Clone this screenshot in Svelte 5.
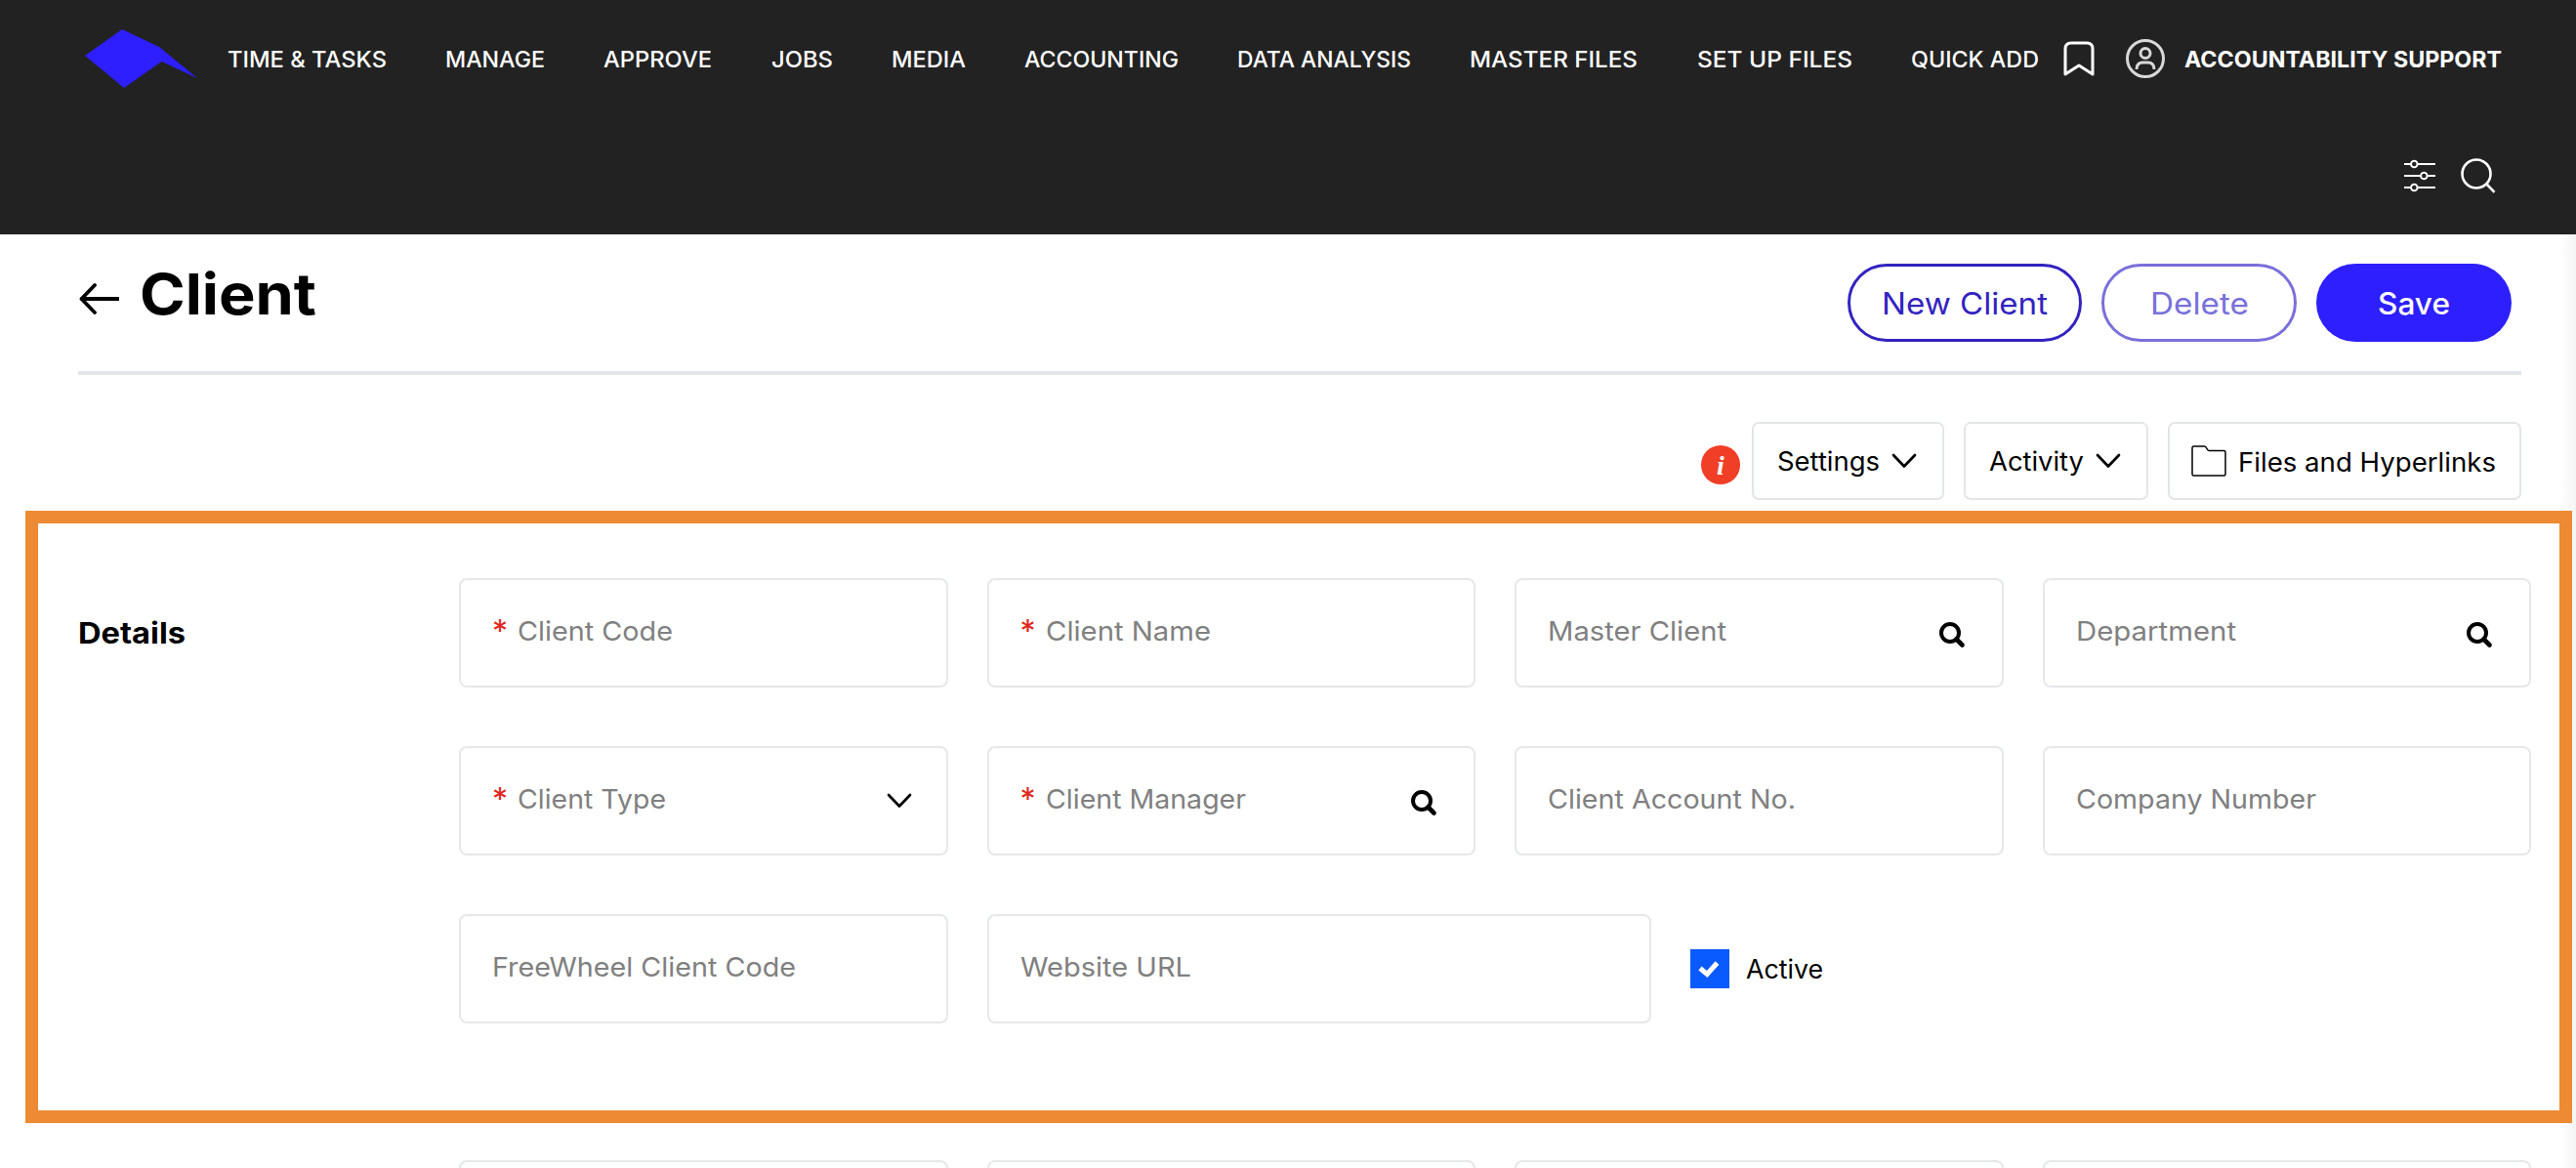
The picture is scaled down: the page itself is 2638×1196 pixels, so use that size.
<script lang="ts">
  const navItems = [
    { label: 'TIME & TASKS', width: 163 },
    { label: 'MANAGE', width: 102 },
    { label: 'APPROVE', width: 111 },
    { label: 'JOBS', width: 63 },
    { label: 'MEDIA', width: 76 },
    { label: 'ACCOUNTING', width: 158 },
    { label: 'DATA ANALYSIS', width: 178 },
    { label: 'MASTER FILES', width: 172 },
    { label: 'SET UP FILES', width: 159 },
    { label: 'QUICK ADD', width: 131 }
  ];

  type Field = { label: string; width: number; required?: boolean; icon?: 'search' | 'chevron'; wide?: boolean };

  const rows: Field[][] = [
    [
      { label: 'Client Code', width: 159, required: true },
      { label: 'Client Name', width: 169, required: true },
      { label: 'Master Client', width: 183, icon: 'search' },
      { label: 'Department', width: 164, icon: 'search' }
    ],
    [
      { label: 'Client Type', width: 152, required: true, icon: 'chevron' },
      { label: 'Client Manager', width: 205, required: true, icon: 'search' },
      { label: 'Client Account No.', width: 254 },
      { label: 'Company Number', width: 246 }
    ],
    [
      { label: 'FreeWheel Client Code', width: 311 },
      { label: 'Website URL', width: 175, wide: true }
    ]
  ];

  let active = $state(true);
</script>

<!-- Text stretched or tightened to a fixed advance width -->
{#snippet fit(label: string, width: number)}
  <svg class="fit" {width} height="1em" aria-label={label}>
    <text x="0" y="0.86em" textLength={width} lengthAdjust="spacingAndGlyphs">{label}</text>
  </svg>
{/snippet}

{#snippet chevron()}
  <svg class="chevron" width="28" height="18" viewBox="0 0 28 18" aria-hidden="true">
    <path d="M3 3l11 11.500L25 3" fill="none" stroke="currentColor" stroke-width="2.700" stroke-linecap="round" stroke-linejoin="round" />
  </svg>
{/snippet}

{#snippet search()}
  <svg class="search" width="28" height="28" viewBox="0 0 28 28" aria-hidden="true">
    <circle cx="12" cy="12" r="9" fill="none" stroke="currentColor" stroke-width="4" />
    <path d="M18.500 18.500l6 6" stroke="currentColor" stroke-width="4.600" stroke-linecap="round" />
  </svg>
{/snippet}

<div class="page">
  <header class="header">
    <div class="topbar">
      <svg class="logo" width="118" height="60" viewBox="0 0 118 60" aria-hidden="true">
        <path d="M0 27L38 0L76 18L115 50L78.500 33L40 60z" fill="#2d1fff" />
      </svg>
      <nav class="nav">
        {#each navItems as item}
          <a class="nav-link" href="#menu">{@render fit(item.label, item.width)}</a>
        {/each}
      </nav>
      <svg class="bookmark" width="32" height="36" viewBox="0 0 32 36" fill="none" aria-hidden="true">
        <path d="M2 34V8Q2 2 8 2H24Q30 2 30 8V34L16 25z" stroke="#fff" stroke-width="3" stroke-linejoin="round" />
      </svg>
      <svg class="avatar" width="40" height="40" viewBox="0 0 40 40" fill="none" stroke="#d8d8d8" stroke-width="3" aria-hidden="true">
        <circle cx="20" cy="20" r="18.500" />
        <circle cx="20" cy="14.500" r="5" />
        <path d="M11 31q0-7 6.500-7h5q6.500 0 6.500 7" />
      </svg>
      <span class="user">{@render fit('ACCOUNTABILITY SUPPORT', 325)}</span>
    </div>
    <div class="tools">
      <svg width="32" height="34" viewBox="0 0 32 34" fill="none" stroke="#fff" stroke-width="2" aria-hidden="true">
        <path d="M0 5h7M13.500 5H32M0 17h17M23.500 17H32M0 29h7M13.500 29H32" />
        <circle cx="10.300" cy="5" r="3.300" />
        <circle cx="20.300" cy="17" r="3.300" />
        <circle cx="10.300" cy="29" r="3.300" />
      </svg>
      <svg width="36" height="36" viewBox="0 0 36 36" fill="none" stroke="#fff" stroke-width="2.600" aria-hidden="true">
        <circle cx="16" cy="16" r="14.500" />
        <path d="M26 26L34.500 34.800" />
      </svg>
    </div>
  </header>

  <section class="title-row">
    <svg class="back" width="42" height="36" viewBox="0 0 42 36" fill="none" aria-hidden="true">
      <path d="M17 4L3.500 18L17 32M3.500 18H41" stroke="#000" stroke-width="3.800" stroke-linecap="round" stroke-linejoin="round" />
    </svg>
    <h1>{@render fit('Client', 181)}</h1>
    <div class="actions">
      <button class="pill new">{@render fit('New Client', 170)}</button>
      <button class="pill delete" disabled>{@render fit('Delete', 101)}</button>
      <button class="pill save">{@render fit('Save', 74)}</button>
    </div>
  </section>

  <section class="toolbar">
    <svg class="info" width="40" height="40" viewBox="0 0 40 40" aria-hidden="true">
      <circle cx="20" cy="20" r="20" fill="#f03e27" />
      <text x="20" y="29.500" text-anchor="middle" class="info-mark">i</text>
    </svg>
    <button class="box settings">{@render fit('Settings', 105)}{@render chevron()}</button>
    <button class="box activity">{@render fit('Activity', 97)}{@render chevron()}</button>
    <button class="box files">
      <svg class="folder" width="36" height="32" viewBox="0 0 36 32" fill="none" aria-hidden="true">
        <path d="M1 29.500V2.500Q1 1 2.500 1H13.500Q15 1 16 3.500Q16.800 5.500 18.500 5.500H33.500Q35 5.500 35 7V29.500Q35 31 33.500 31H2.500Q1 31 1 29.500z" stroke="#000" stroke-width="1.500" />
      </svg>
      <span class="files-label">{@render fit('Files and Hyperlinks', 264)}</span>
    </button>
  </section>

  <section class="details">
    <h2>{@render fit('Details', 110)}</h2>
    <div class="form">
      {#each rows as row}
        <div class="row">
          {#each row as field}
            <div class="field" class:wide={field.wide}>
              {#if field.required}<span class="star">*</span>{/if}
              <span class="label">{@render fit(field.label, field.width)}</span>
              {#if field.icon === 'search'}{@render search()}{/if}
              {#if field.icon === 'chevron'}{@render chevron()}{/if}
            </div>
          {/each}
          {#if row.length === 2}
            <button class="check" role="checkbox" aria-checked={active} onclick={() => (active = !active)}>
              <svg width="40" height="40" viewBox="0 0 40 40" aria-hidden="true">
                <rect width="40" height="40" fill="#0a5bff" />
                {#if active}
                  <path d="M10 19.500l7.200 6L27.500 14" fill="none" stroke="#fff" stroke-width="5" />
                {/if}
              </svg>
              {@render fit('Active', 79)}
            </button>
          {/if}
        </div>
      {/each}
    </div>
  </section>

  <section class="next">
    {#each [0, 1, 2, 3] as i (i)}
      <div class="field"></div>
    {/each}
  </section>
</div>

<style>
  :global(body) {
    background: #fff;
    overflow: hidden;
  }

  .page {
    width: 2638px;
    height: 1196px;
    overflow: hidden;
    box-sizing: border-box;
    background: linear-gradient(to left, #f4f4f4, #fff 16px);
    font-family: Inter, 'Liberation Sans', sans-serif;
    color: #000;
  }

  .page * {
    box-sizing: border-box;
  }

  button {
    font: inherit;
    color: inherit;
    background: none;
    border: none;
    padding: 0;
  }

  svg {
    display: block;
    flex-shrink: 0;
  }

  .fit {
    overflow: visible;
    fill: currentColor;
  }

  .header {
    height: 240px;
    background: #222;
    color: #fff;
  }

  .topbar {
    display: flex;
    align-items: center;
    height: 120px;
    padding-left: 87px;
  }

  .logo {
    margin-right: 28px;
  }

  .nav {
    display: flex;
    gap: 60.200px;
    font-size: 23px;
    font-weight: 550;
  }

  .nav-link {
    color: inherit;
    text-decoration: none;
  }

  .bookmark {
    margin-left: 25px;
  }

  .avatar {
    margin-left: 32px;
  }

  .user {
    margin-left: 20px;
    font-size: 23px;
    font-weight: 700;
  }

  .tools {
    display: flex;
    align-items: center;
    justify-content: flex-end;
    gap: 26px;
    height: 120px;
    padding-right: 82px;
  }

  .title-row {
    display: flex;
    width: 2502px;
    height: 144px;
    margin-left: 80px;
    border-bottom: 4px solid #e3e6e8;
  }

  .back {
    margin-top: 48px;
  }

  h1 {
    margin: 32px 0 0 21px;
    font-size: 58px;
    font-weight: 700;
  }

  .actions {
    display: flex;
    gap: 20px;
    margin: 30px 10px 0 auto;
  }

  .pill {
    display: flex;
    align-items: center;
    justify-content: center;
    width: 200px;
    height: 80px;
    border-radius: 40px;
    font-size: 31px;
  }

  .new {
    width: 240px;
    border: 3px solid #3223c0;
    color: #3223c0;
  }

  .delete {
    border: 3px solid #7970db;
    color: #7970db;
  }

  .save {
    background: #2d1fff;
    color: #fff;
    font-weight: 500;
  }

  .toolbar {
    display: flex;
    justify-content: flex-end;
    gap: 20px;
    width: 2502px;
    height: 139px;
    margin-left: 80px;
    padding-top: 48px;
    font-size: 26.500px;
  }

  .info {
    margin: 24px -8px 0 0;
  }

  .info-mark {
    font: italic 700 28px 'Liberation Serif', serif;
    fill: #fff;
  }

  .box {
    display: flex;
    align-items: center;
    gap: 11px;
    height: 80px;
    padding: 0 24px;
    border: 2px solid #e3e6e8;
    border-radius: 7px;
    background: #fff;
  }

  .settings {
    width: 197px;
  }

  .activity {
    width: 189px;
  }

  .files {
    width: 362px;
    padding-left: 22px;
    gap: 12px;
  }

  .files-label {
    padding-top: 2px;
  }

  .details {
    display: flex;
    width: 2608px;
    height: 627px;
    margin-left: 26px;
    padding: 56px 0 0 41px;
    border: 13px solid #ed8a33;
    background: #fff;
  }

  h2 {
    width: 390px;
    margin: 41px 0 0;
    font-size: 30px;
    font-weight: 650;
  }

  .form {
    display: flex;
    flex-direction: column;
    gap: 60px;
  }

  .row {
    display: flex;
    gap: 40px;
  }

  .field {
    display: flex;
    align-items: center;
    width: 500.500px;
    height: 112px;
    padding: 0 34px 0 32px;
    border: 2px solid #e5e8e9;
    border-radius: 8px;
    color: #808080;
    font-size: 27.500px;
  }

  .field.wide {
    width: 680px;
  }

  .label {
    margin-bottom: 4px;
  }

  .star {
    width: 26px;
    margin-bottom: 2px;
    font-size: 32px;
    line-height: 40px;
    color: #e0271c;
  }

  .field .search,
  .field .chevron {
    margin-left: auto;
    color: #000;
  }

  .field .search {
    margin-right: 3px;
    margin-top: 3px;
  }

  .check {
    display: flex;
    align-items: center;
    gap: 17px;
    font-size: 26.500px;
  }

  .next {
    display: flex;
    gap: 40px;
    padding: 38px 0 0 470px;
  }
</style>
